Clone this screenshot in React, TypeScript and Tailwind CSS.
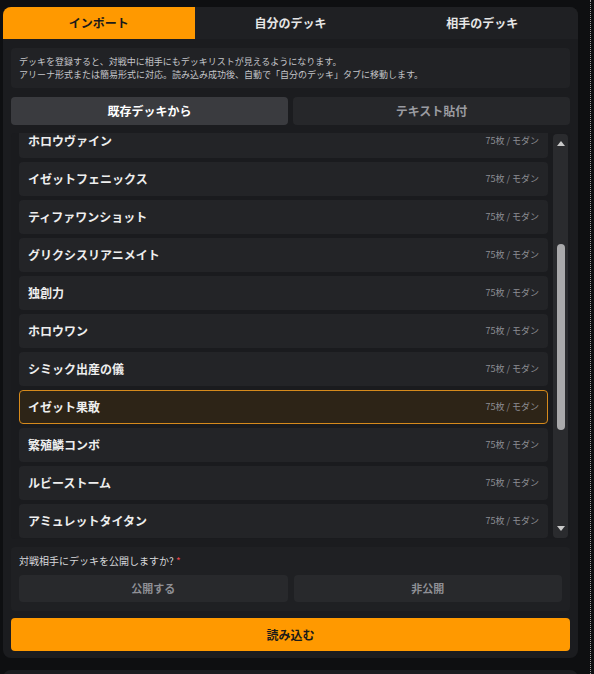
import { useState } from 'react';

const decks = [
  'ホロウヴァイン',
  'イゼットフェニックス',
  'ティファワンショット',
  'グリクシスリアニメイト',
  '独創力',
  'ホロウワン',
  'シミック出産の儀',
  'イゼット果敢',
  '繁殖鱗コンボ',
  'ルビーストーム',
  'アミュレットタイタン',
];

const tabs = ['インポート', '自分のデッキ', '相手のデッキ'];

export default function App() {
  const [tab, setTab] = useState(0);
  const [source, setSource] = useState<'saved' | 'text'>('saved');
  const [selected, setSelected] = useState('イゼット果敢');
  const [visibility, setVisibility] = useState<'public' | 'private' | null>(null);

  return (
    <div
      className="flex w-[594px] h-[674px] overflow-hidden bg-[#0e0f11] text-white"
      style={{ fontFamily: '"Noto Sans CJK JP", "Noto Sans", sans-serif' }}
    >
      <div className="pl-[3px] pt-[7px] flex flex-col">
        <div className="shrink-0 w-[575px] rounded-lg bg-[#1b1c1f] overflow-hidden">
          {/* tabs */}
          <div className="grid grid-cols-3 h-8 bg-[#1f2023]">
            {tabs.map((t, i) => (
              <button
                key={t}
                onClick={() => setTab(i)}
                className={
                  i === tab
                    ? 'bg-[#ff9900] text-[#1a1a1a] text-[12px] font-bold'
                    : 'text-[#e6e6e6] text-[12px] font-bold'
                }
              >
                {t}
              </button>
            ))}
          </div>

          <div className="px-2 pt-[9px] pb-[7px] flex flex-col">
            <div className="rounded bg-[#212225] px-2 py-[7px] text-[9px] leading-[13px] text-[#c4c5c9]">
              <p>デッキを登録すると、対戦中に相手にもデッキリストが見えるようになります。</p>
              <p>アリーナ形式または簡易形式に対応。読み込み成功後、自動で「自分のデッキ」タブに移動します。</p>
            </div>

            {/* source switch */}
            <div className="mt-[9px] grid grid-cols-2 gap-[5px]">
              <button
                onClick={() => setSource('saved')}
                className={`h-7 rounded text-[12px] font-bold ${
                  source === 'saved' ? 'bg-[#3a3b3f] text-white' : 'bg-[#26272a] text-[#9a9ba0]'
                }`}
              >
                既存デッキから
              </button>
              <button
                onClick={() => setSource('text')}
                className={`h-7 rounded text-[12px] font-bold ${
                  source === 'text' ? 'bg-[#3a3b3f] text-white' : 'bg-[#26272a] text-[#9a9ba0]'
                }`}
              >
                テキスト貼付
              </button>
            </div>

            {/* deck list */}
            <div className="mt-2 h-[406px] flex rounded bg-[#1a1b1e] overflow-hidden">
              <div className="flex-1 overflow-hidden pl-2 pr-[5px]">
                <div className="-mt-[9px] flex flex-col gap-1">
                  {decks.map((d) => (
                    <button
                      key={d}
                      onClick={() => setSelected(d)}
                      className={`h-[34px] shrink-0 flex items-center justify-between rounded px-2 border ${
                        selected === d
                          ? 'bg-[#2d2417] border-[#d68a1c]'
                          : 'bg-[#232427] border-transparent'
                      }`}
                    >
                      <span className="text-[12px] font-bold text-[#eeeeee]">{d}</span>
                      <span className="text-[9px] text-[#8d8e94]">75枚 / モダン</span>
                    </button>
                  ))}
                </div>
              </div>
              {/* scrollbar */}
              <div className="w-[15px] mr-[2px] my-px flex flex-col items-center rounded-sm bg-[#2a2b2e]">
                <svg width="10" height="18" viewBox="0 0 10 18" className="shrink-0">
                  <path d="M1 12 L5 7 L9 12 Z" fill="#c9c9c9" />
                </svg>
                <div className="h-[92px] shrink-0" />
                <div className="w-2 h-[186px] rounded-full bg-[#a9a9ab]" />
                <div className="flex-1" />
                <svg width="10" height="18" viewBox="0 0 10 18" className="shrink-0">
                  <path d="M1 6 L5 11 L9 6 Z" fill="#c9c9c9" />
                </svg>
              </div>
            </div>

            {/* visibility */}
            <div className="mt-2 rounded bg-[#1f2023] px-2 pt-[7px] pb-[9px]">
              <p className="text-[10px] text-[#d7d8db] leading-[14px]">
                対戦相手にデッキを公開しますか? <span className="text-[#e5484d]">*</span>
              </p>
              <div className="mt-[7px] grid grid-cols-2 gap-[6px]">
                <button
                  onClick={() => setVisibility('public')}
                  className={`h-[27px] rounded text-[11px] font-bold ${
                    visibility === 'public' ? 'bg-[#3a3b3f] text-white' : 'bg-[#28292c] text-[#8f9096]'
                  }`}
                >
                  公開する
                </button>
                <button
                  onClick={() => setVisibility('private')}
                  className={`h-[27px] rounded text-[11px] font-bold ${
                    visibility === 'private' ? 'bg-[#3a3b3f] text-white' : 'bg-[#28292c] text-[#8f9096]'
                  }`}
                >
                  非公開
                </button>
              </div>
            </div>

            <button className="mt-[7px] h-[33px] rounded bg-[#ff9900] text-[12px] font-bold text-[#1a1a1a]">
              読み込む
            </button>
          </div>
        </div>

        <div className="shrink-0 mt-3 w-[575px] h-10 rounded-lg bg-[#1b1c1f]" />
      </div>
      <div className="ml-[12px] w-px h-full border-l border-dotted border-[#9a9a9a]" />
    </div>
  );
}
